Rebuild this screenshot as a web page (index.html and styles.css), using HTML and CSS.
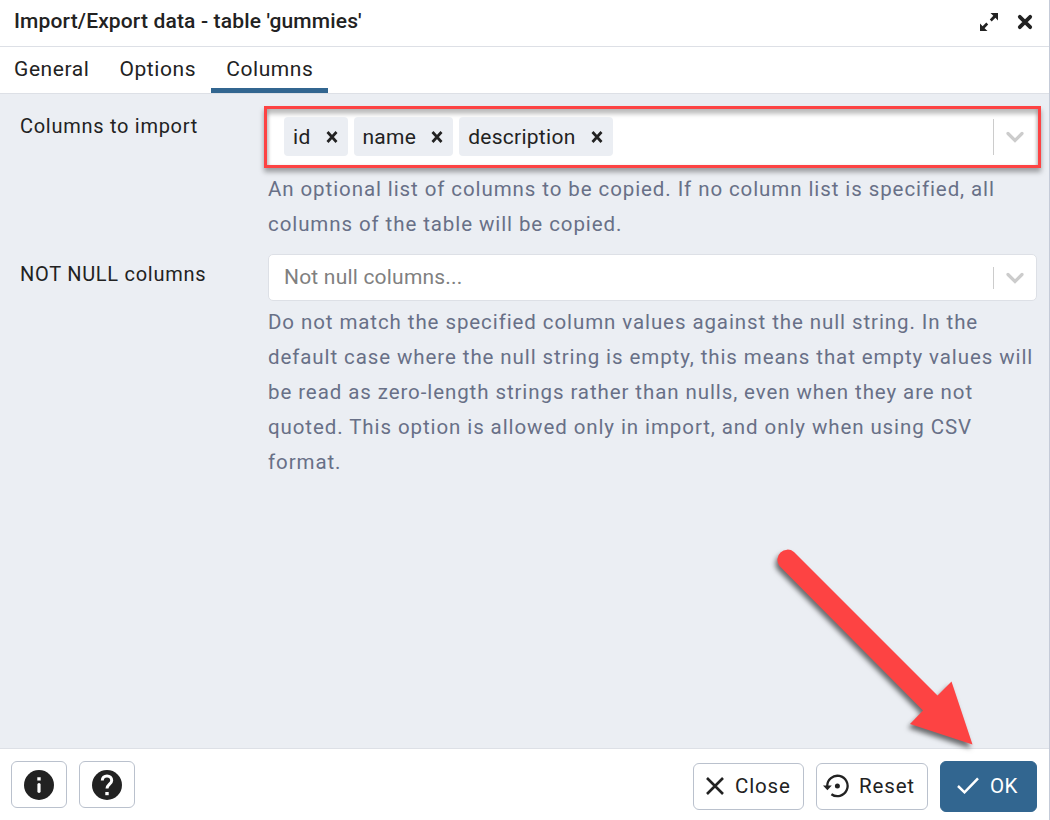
FILE: index.html
```html
<!DOCTYPE html>
<html lang="en">
<head>
<meta charset="utf-8">
<title>Import/Export data</title>
<link rel="stylesheet" href="styles.css">
</head>
<body>
<div class="dialog">
  <header class="titlebar">
    <h1 class="title">Import/Export data - table 'gummies'</h1>
    <div class="window-actions">
      <svg width="20" height="20" viewBox="0 0 20 20"><path d="M11.500 0.900h7.500v7.500l-2.600-2.600-3.700 3.600-1.900-1.900 3.500-3.700zM8.500 19.100H1v-7.500l2.600 2.600 3.700-3.600 1.900 1.900-3.600 3.700z" fill="#222"/></svg>
      <svg width="16" height="16" viewBox="0 0 16 16"><path d="M2.800 2.800l10.400 10.400M13.200 2.800L2.800 13.200" stroke="#222" stroke-width="3.800" stroke-linecap="round"/></svg>
    </div>
  </header>
  <nav class="tabs">
    <div class="tab">General</div>
    <div class="tab">Options</div>
    <div class="tab active">Columns</div>
  </nav>
  <main class="content">
    <section class="field first">
      <div class="label">Columns to import</div>
      <div class="control">
        <div class="select highlighted">
          <div class="tags">
            <span class="tag">id <svg width="12" height="12" viewBox="0 0 12 12"><path d="M1.500 1l9 10M10.500 1l-9 10" stroke="#222" stroke-width="2.700"/></svg></span>
            <span class="tag">name <svg width="12" height="12" viewBox="0 0 12 12"><path d="M1.500 1l9 10M10.500 1l-9 10" stroke="#222" stroke-width="2.700"/></svg></span>
            <span class="tag">description <svg width="12" height="12" viewBox="0 0 12 12"><path d="M1.500 1l9 10M10.500 1l-9 10" stroke="#222" stroke-width="2.700"/></svg></span>
          </div>
          <div class="indicator"><svg width="18" height="12" viewBox="0 0 18 12"><path d="M2 2.500l7 7 7-7" fill="none" stroke="#ccc" stroke-width="3.200" stroke-linecap="round"/></svg></div>
        </div>
        <p class="help">An optional list of columns to be copied. If no column list is specified, all<br>columns of the table will be copied.</p>
      </div>
    </section>
    <section class="field">
      <div class="label">NOT NULL columns</div>
      <div class="control">
        <div class="select">
          <span class="placeholder">Not null columns...</span>
          <div class="indicator"><svg width="18" height="12" viewBox="0 0 18 12"><path d="M2 2.500l7 7 7-7" fill="none" stroke="#ccc" stroke-width="3.200" stroke-linecap="round"/></svg></div>
        </div>
        <p class="help">Do not match the specified column values against the null string. In the<br>default case where the null string is empty, this means that empty values will<br>be read as zero-length strings rather than nulls, even when they are not<br>quoted. This option is allowed only in import, and only when using CSV<br>format.</p>
      </div>
    </section>
  </main>
  <footer class="footer">
    <div class="group left">
      <button class="btn icon"><svg width="30" height="30" viewBox="0 0 30 30"><circle cx="15" cy="15" r="15" fill="#222"/><path d="M13.300 7.200h3.400v3.200h-3.400z" fill="#fff"/><path d="M15 14.600v6.700" stroke="#fff" stroke-width="3.200" stroke-linecap="round"/></svg></button>
      <button class="btn icon"><svg width="30" height="30" viewBox="0 0 30 30"><circle cx="15" cy="15" r="15" fill="#222"/><path d="M10.300 10.600C10.300 7.700 12.300 6 15 6s4.700 1.700 4.700 4.400c0 3.500-4.700 4-4.700 8.200" fill="none" stroke="#fff" stroke-width="3"/><path d="M13.300 22h3.400v3.200h-3.400z" fill="#fff"/></svg></button>
    </div>
    <div class="group right">
      <button class="btn close"><svg width="18" height="18" viewBox="0 0 18 18"><path d="M1 1l16 16M17 1L1 17" stroke="#222" stroke-width="2.600"/></svg>Close</button>
      <button class="btn reset"><svg width="26" height="24" viewBox="0 0 26 24"><path d="M4.200 12A10.200 10.200 0 1 1 8.400 20.200" fill="none" stroke="#222" stroke-width="2.300"/><path d="M0 11.500h8.800l-4.400 4.700z" fill="#222"/><circle cx="14.400" cy="12" r="2.500" fill="#222"/></svg>Reset</button>
      <button class="btn ok"><svg width="22" height="17" viewBox="0 0 22 17"><path d="M1 9l6.500 6.300L21 1.300" fill="none" stroke="#fff" stroke-width="2.500"/></svg>OK</button>
    </div>
  </footer>
  <svg class="arrow" width="230" height="220" viewBox="0 0 230 220"><path d="M20.500 12.500a10 10 0 0 1 13.500-.500L177.500 155.500l14-14 21 63-62.500-20.500 13-13.500L19.500 26a10 10 0 0 1 1-13.500z" fill="#fd4343"/></svg>
  <i class="edge-mark one"></i><i class="edge-mark two"></i>
</div>
</body>
</html>
```
FILE: styles.css
```css
* { box-sizing: border-box; }
body { margin: 0; font-family: Roboto, "Liberation Sans", sans-serif; font-size: 20px; letter-spacing: 0.72px; color: #222; }
svg { display: block; flex: none; }
.dialog { position: relative; width: 1050px; height: 820px; display: flex; flex-direction: column; background: #fff; border-right: 1px solid #c5cbd8; overflow: hidden; }
.titlebar { height: 47px; flex: none; display: flex; justify-content: space-between; align-items: center; padding: 0 16px 3px 14px; border-bottom: 1px solid #dde0e6; }
.title { margin: 0; padding-bottom: 2px; font-size: 21px; line-height: 24px; font-weight: 500; letter-spacing: 0.15px; }
.window-actions { display: flex; align-items: center; gap: 18px; }
.tabs { height: 47px; flex: none; display: flex; border-bottom: 1px solid #dde0e6; }
.tab { padding: 10px 15px 0; font-size: 21px; line-height: 24px; letter-spacing: .58px; }
.tab:first-child { padding-left: 14px; }
.tab.active { border-bottom: 5px solid #326690; }
.content { flex: 1; background: #ebeef3; padding: 14px 12px 0 20px; }
.field { display: flex; }
.field.first { height: 146px; }
.label { width: 248px; flex: none; padding-top: 6px; line-height: 24px; }
.field:not(.first) .label { padding-top: 8px; }
.control { width: 769px; }
.select { height: 47px; display: flex; align-items: center; justify-content: space-between; background: #fff; border: 1px solid #dde0e6; border-radius: 5px; }
.highlighted { height: 62px; margin: -2px -4px 0; border: 3px solid #fd4343; border-radius: 0; box-shadow: 0 4px 5px rgba(0,0,0,.35), inset 0 5px 4px rgba(0,0,0,.25), inset 3px 0 3px -1px rgba(0,0,0,.12), inset -3px 0 3px -1px rgba(0,0,0,.12); }
.tags { display: flex; gap: 6px; padding: 0 0 2px 17px; }
.tag { height: 39px; display: flex; align-items: center; gap: 15px; padding: 2px 10px 0 9px; background: #ebeef3; border-radius: 4px; font-size: 21px; letter-spacing: .27px; }
.indicator { height: 22px; width: 43px; padding-left: 12px; display: flex; align-items: center; border-left: 1px solid #ccc; }
.highlighted .indicator { height: 36px; width: 45px; }
.placeholder { padding: 0 0 2px 15px; color: #808080; font-size: 21px; letter-spacing: .2px; }
.help { margin: 4px 0 0; font-size: 20.5px; line-height: 35px; letter-spacing: .91px; color: #687087; white-space: nowrap; }
.footer { height: 72px; flex: none; display: flex; justify-content: space-between; align-items: flex-start; border-top: 1px solid #dde0e6; padding: 12px 12px 0 11px; }
.group { display: flex; gap: 12px; align-items: center; }
.btn { height: 47px; display: flex; align-items: center; padding: 0 12px 2px; background: #fff; border: 1px solid #bac1cd; border-radius: 6px; font: 20.5px Roboto, "Liberation Sans", sans-serif; letter-spacing: .85px; color: #222; }
.btn.icon { width: 56px; padding-bottom: 0; }
.btn.close { width: 111px; gap: 11px; }
.btn.reset { width: 112px; gap: 10px; padding-left: 6px; }
.btn.ok { width: 97px; height: 51px; padding-left: 16px; gap: 11px; background: #326690; border-color: #326690; color: #fff; letter-spacing: .4px; }
.arrow { position: absolute; left: 760px; top: 540px; filter: drop-shadow(-2px 4px 2.5px rgba(0,0,0,.55)); }
.edge-mark { position: absolute; right: -1px; width: 1px; height: 4px; background: #526580; }
.edge-mark.one { top: 13px; }
.edge-mark.two { top: 142px; }
```
